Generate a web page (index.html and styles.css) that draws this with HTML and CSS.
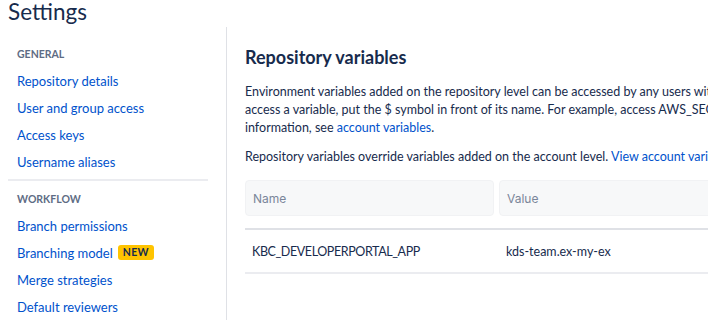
FILE: index.html
```html
<!DOCTYPE html>
<html>
<head>
<meta charset="utf-8">
<link rel="stylesheet" href="styles.css">
</head>
<body>
<h1 class="page-title">Settings</h1>
<div class="layout">
  <aside class="sidebar">
    <nav class="nav">
      <div class="nav-group">
        <div class="nav-heading">GENERAL</div>
        <a class="nav-link" href="#">Repository details</a>
        <a class="nav-link" href="#">User and group access</a>
        <a class="nav-link" href="#">Access keys</a>
        <a class="nav-link" href="#">Username aliases</a>
      </div>
      <div class="nav-group nav-group-sep">
        <div class="nav-heading">WORKFLOW</div>
        <a class="nav-link" href="#">Branch permissions</a>
        <a class="nav-link" href="#">Branching model <span class="badge">NEW</span></a>
        <a class="nav-link" href="#">Merge strategies</a>
        <a class="nav-link" href="#">Default reviewers</a>
      </div>
    </nav>
  </aside>
  <main class="main">
    <h2 class="section-title">Repository variables</h2>
    <p class="desc"><span class="line">Environment variables added on the repository level can be accessed by any users with push permission in the repository. To</span><span class="line">access a variable, put the $ symbol in front of its name. For example, access AWS_SECRET by using $AWS_SECRET. For more</span><span class="line">information, see <a href="#" class="link">account variables</a>.</span></p>
    <p class="desc desc-2"><span class="line">Repository variables override variables added on the account level. <a href="#" class="link">View account variables</a></span></p>
    <div class="table">
      <div class="table-head">
        <div class="head-cell name-col">Name</div>
        <div class="head-cell value-col">Value</div>
      </div>
      <div class="table-row">
        <div class="cell name-col cell-key">KBC_DEVELOPERPORTAL_APP</div>
        <div class="cell value-col">kds-team.ex-my-ex</div>
      </div>
    </div>
  </main>
</div>
</body>
</html>
```
FILE: styles.css
```css
* { box-sizing: border-box; }
html, body { margin: 0; padding: 0; }
body {
  width: 716px;
  height: 320px;
  overflow: hidden;
  background: #fff;
  font-family: "Lato", "Noto Sans", sans-serif;
  color: #172b4d;
}
.page-title {
  margin: 0;
  padding: 0 0 0 8px;
  height: 27px;
  font-size: 22.5px;
  line-height: 24px;
  font-weight: 400;
  color: #172b4d;
}
.layout {
  display: flex;
  height: 293px;
  padding-left: 8px;
}
.sidebar {
  width: 219px;
  flex: none;
  border-right: 1px solid #dfe1e6;
  padding-right: 18px;
}
.nav { width: 200px; }
.nav-group { padding: 18px 0 4px 9px; }
.nav-group-sep {
  border-top: 2px solid #ebecf0;
  padding-top: 9px;
}
.nav-heading {
  font-size: 10.5px;
  font-weight: 700;
  color: #5e6c84;
  height: 18px;
  line-height: 18px;
  letter-spacing: 0;
  margin-bottom: 4px;
}
.nav-link {
  display: flex;
  align-items: center;
  gap: 5px;
  height: 27px;
  font-size: 13px;
  color: #0052cc;
  text-decoration: none;
}
.badge {
  display: inline-block;
  background: #ffc400;
  color: #172b4d;
  font-size: 10.5px;
  font-weight: 700;
  line-height: 15px;
  padding: 0 5px;
  border-radius: 3px;
  letter-spacing: 0.3px;
}
.main {
  width: 481px;
  overflow: hidden;
  padding-left: 18px;
  padding-top: 18px;
}
.section-title {
  margin: 0;
  font-size: 18px;
  line-height: 24px;
  font-weight: 700;
  color: #172b4d;
}
.desc {
  margin: 14px 0 0;
  width: 900px;
  font-size: 12.5px;
  line-height: 18px;
  color: #172b4d;
}
.line { display: block; white-space: nowrap; }
.desc-2 { margin-top: 11px; }
.link { color: #0052cc; text-decoration: none; }
.table {
  margin-top: 14px;
  width: 600px;
}
.table-head {
  display: flex;
  gap: 5px;
  padding-bottom: 12px;
  border-bottom: 2px solid #dfe1e6;
}
.head-cell {
  height: 36px;
  background: #f7f8f9;
  border: 1px solid #f1f2f4;
  border-radius: 4px;
  padding: 0 7px;
  display: flex;
  align-items: center;
  font-family: "Inter", "Liberation Sans", sans-serif;
  font-size: 12px;
  color: #7a869a;
}
.name-col { width: 249px; flex: none; }
.value-col { flex: 1; }
.table-row {
  display: flex;
  gap: 5px;
  height: 44px;
  align-items: center;
  border-bottom: 2px solid #ebecf0;
}
.cell {
  padding: 0 7px;
  font-size: 12.5px;
  color: #172b4d;
}
.cell-key { letter-spacing: -0.4px; }
```
